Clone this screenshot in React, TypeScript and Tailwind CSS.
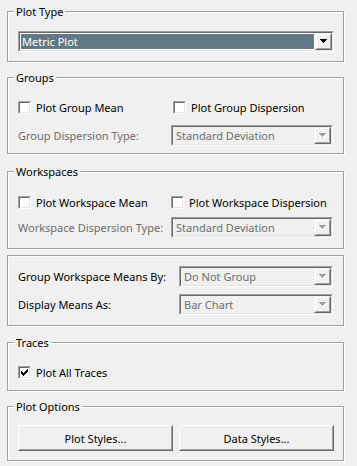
import clsx from "clsx";
import { FC, ReactNode } from "react";

const font = "font-['Noto_Sans',sans-serif] text-[11px] leading-[15px]";

const GroupBox: FC<{ legend?: string; className?: string; children: ReactNode }> = ({
  legend,
  className,
  children,
}) => (
  <div
    className={clsx(
      "relative w-[337px] border border-[#a0a0a0] shadow-[1px_1px_0_#fff,inset_1px_1px_0_#fff] pl-[10px] pr-[9px]",
      className,
    )}
  >
    {legend && (
      <span className="absolute -top-[8px] left-[6px] bg-[#f0f0f0] px-[2px] text-black">
        {legend}
      </span>
    )}
    {children}
  </div>
);

// two-tone sunken frame used by checkboxes and combos
const Sunken: FC<{ className?: string; innerClassName?: string; children?: ReactNode }> = ({
  className,
  innerClassName,
  children,
}) => (
  <div
    className={clsx(
      "border border-t-[#a0a0a0] border-l-[#a0a0a0] border-b-white border-r-white",
      className,
    )}
  >
    <div
      className={clsx(
        "h-full w-full border border-t-[#696969] border-l-[#696969] border-b-[#e3e3e3] border-r-[#e3e3e3]",
        innerClassName,
      )}
    >
      {children}
    </div>
  </div>
);

// classic 7x7 pixel tick
const ticks = [
  [6, 0], [5, 1], [6, 1], [0, 2], [4, 2], [5, 2], [6, 2], [0, 3], [1, 3], [3, 3], [4, 3], [5, 3],
  [0, 4], [1, 4], [2, 4], [3, 4], [4, 4], [1, 5], [2, 5], [3, 5], [2, 6],
];

const Checkbox: FC<{ label: string; checked?: boolean }> = ({ label, checked }) => (
  <div className="flex items-center gap-[5px] text-black">
    <Sunken className="h-[13px] w-[13px] shrink-0" innerClassName="bg-white flex items-center justify-center">
      {checked && (
        <svg width="7" height="7" viewBox="0 0 7 7" shapeRendering="crispEdges">
          {ticks.map(([x, y]) => (
            <rect key={`${x}-${y}`} x={x} y={y} width="1" height="1" fill="#000" />
          ))}
        </svg>
      )}
    </Sunken>
    <span>{label}</span>
  </div>
);

const Arrow: FC<{ disabled?: boolean }> = ({ disabled }) => (
  <svg width="8" height="5" viewBox="0 0 8 5" shapeRendering="crispEdges">
    {disabled && <path d="M1 1h7L4.5 5z" fill="#fff" />}
    <path d="M0 0h7L3.5 4z" fill={disabled ? "#a0a0a0" : "#000"} />
  </svg>
);

const Combo: FC<{ value: string; disabled?: boolean; selected?: boolean; className?: string }> = ({
  value,
  disabled,
  selected,
  className,
}) => (
  <Sunken
    className={clsx("h-[21px] shrink-0", className)}
    innerClassName={clsx("flex", disabled ? "bg-[#f0f0f0]" : "bg-white")}
  >
    <div className="flex-1 min-w-0 p-[1px]">
      <div
        className={clsx(
          "h-full pl-[1px] flex items-center truncate",
          selected ? "bg-[#627884] text-white" : disabled ? "text-[#6d6d6d] pl-[2px]" : "text-black",
        )}
      >
        {value}
      </div>
    </div>
    <div className="w-[17px] h-[17px] shrink-0 border border-t-[#f0f0f0] border-l-[#f0f0f0] border-b-[#696969] border-r-[#696969]">
      <div className="h-full w-full flex items-center justify-center bg-[#f0f0f0] border border-t-white border-l-white border-b-[#a0a0a0] border-r-[#a0a0a0]">
        <Arrow disabled={disabled} />
      </div>
    </div>
  </Sunken>
);

const Button: FC<{ children: ReactNode }> = ({ children }) => (
  <div className="w-[155px] h-[26px] border border-t-white border-l-white border-b-[#696969] border-r-[#696969]">
    <div className="h-full w-full flex items-center justify-center bg-[#f0f0f0] border border-t-[#f0f0f0] border-l-[#f0f0f0] border-b-[#a0a0a0] border-r-[#a0a0a0] text-black">
      {children}
    </div>
  </div>
);

export default function App() {
  return (
    <div className={clsx("min-h-screen w-[357px] bg-[#f0f0f0] pl-[7px] pt-[11px]", font)}>
      <GroupBox legend="Plot Type" className="h-[51px] pt-[19px]">
        <Combo value="Metric Plot" selected className="w-full" />
      </GroupBox>

      <GroupBox legend="Groups" className="mt-[15px] h-[77px] pt-[23px]">
        <div className="flex h-[13px] items-center">
          <div className="w-[155px]">
            <Checkbox label="Plot Group Mean" />
          </div>
          <Checkbox label="Plot Group Dispersion" />
        </div>
        <div className="mt-[11px] flex items-center justify-between">
          <span className="text-[#6d6d6d]">Group Dispersion Type:</span>
          <Combo value="Standard Deviation" disabled className="w-[162px] mr-[1px]" />
        </div>
      </GroupBox>

      <GroupBox legend="Workspaces" className="mt-[17px] h-[78px] pt-[24px]">
        <div className="flex h-[13px] items-center">
          <div className="w-[153px]">
            <Checkbox label="Plot Workspace Mean" />
          </div>
          <Checkbox label="Plot Workspace Dispersion" />
        </div>
        <div className="mt-[8px] flex items-center justify-between">
          <span className="text-[#6d6d6d]">Workspace Dispersion Type:</span>
          <Combo value="Standard Deviation" disabled className="w-[162px] mr-[1px]" />
        </div>
      </GroupBox>

      <GroupBox className="mt-[6px] h-[71px] pt-[10px]">
        <div className="flex items-center justify-between">
          <span className="text-black">Group Workspace Means By:</span>
          <Combo value="Do Not Group" disabled className="w-[154px] mr-[1px]" />
        </div>
        <div className="mt-[7px] flex items-center justify-between">
          <span className="text-black">Display Means As:</span>
          <Combo value="Bar Chart" disabled className="w-[154px] mr-[1px]" />
        </div>
      </GroupBox>

      <GroupBox legend="Traces" className="mt-[16px] h-[49px] pt-[23px]">
        <div className="flex h-[13px] items-center">
          <Checkbox label="Plot All Traces" checked />
        </div>
      </GroupBox>

      <GroupBox legend="Plot Options" className="mt-[15px] h-[55px] pt-[18px]">
        <div className="flex gap-[6px]">
          <Button>Plot Styles...</Button>
          <Button>Data Styles...</Button>
        </div>
      </GroupBox>
    </div>
  );
}
